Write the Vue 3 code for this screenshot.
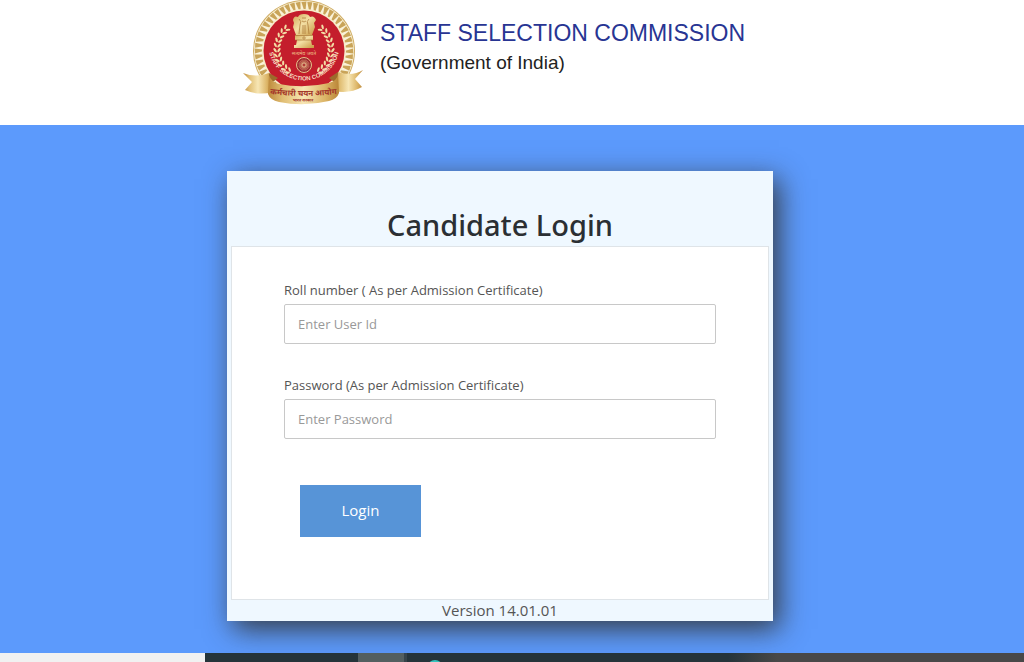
<template>
  <div class="page">
    <header class="header">
      <div class="container brand">
        <svg class="emblem" viewBox="0 0 122 105" role="img" aria-label="Staff Selection Commission emblem">
          <defs>
            <linearGradient id="gold" x1="0" y1="0" x2="1" y2="1">
              <stop offset="0" stop-color="#d2a956" />
              <stop offset="0.45" stop-color="#f3dfa4" />
              <stop offset="1" stop-color="#c6963f" />
            </linearGradient>
            <linearGradient id="ribbon" x1="0" y1="0" x2="1" y2="0">
              <stop offset="0" stop-color="#bd8a3c" />
              <stop offset="0.2" stop-color="#e0bd72" />
              <stop offset="0.5" stop-color="#f7e6b4" />
              <stop offset="0.8" stop-color="#dcb567" />
              <stop offset="1" stop-color="#b98537" />
            </linearGradient>
            <path id="name-arc" d="M26.5 45 A35.5 35.5 0 0 0 97.5 45" />
            <path id="ribbon-arc" d="M29 94 Q61 98 94 94" />
            <path id="ribbon-arc-small" d="M40 101 Q61 102 82 101" />
          </defs>

          <circle cx="62" cy="51" r="51" fill="#cfac62" />
          <circle cx="62" cy="51" r="50" fill="#faf2d8" />
          <path
            v-for="n in 52"
            :key="'tooth' + n"
            d="M59.4 2 L64.4 1.6 L63.6 9.4 L61.8 9.4 Z"
            fill="#c9a459"
            :transform="`rotate(${n * 6.923} 62 51)`"
          />
          <circle cx="62" cy="51" r="42" fill="#f7ecc9" />
          <circle cx="62" cy="51" r="40.5" fill="#c41e2c" />

          <!-- Laurel wreath -->
          <g fill="#f3dda5">
            <g v-for="leaf in leaves" :key="leaf.id" :transform="leaf.transform">
              <ellipse cx="0" cy="-1.9" rx="2.5" ry="1.1" transform="rotate(35 0 -1.9)" />
              <ellipse cx="0" cy="1.9" rx="2.5" ry="1.1" transform="rotate(-35 0 1.9)" />
            </g>
          </g>

          <!-- Lion capital -->
          <g fill="url(#gold)">
            <path d="M51 20 Q52 15 56 17 Q57 14 62 14 Q67 14 68 17 Q72 15 74 20 L72 23 L73 27 L70 35 L54 35 L51 27 L52 23 Z" />
            <path d="M53 35 H71 V40 H53 Z M55 40 H69 L70 45 H54 Z M52 45 H72 V48 H52 Z" />
          </g>
          <g fill="none" stroke="#a87432" stroke-width="0.7">
            <path d="M57 19 Q60 21 58 25 L57 34 M67 19 Q64 21 66 25 L67 34 M60 18 H64 M60 21 Q62 23 64 21 M61 25 V34 M63 25 V34 M53 35.5 H71 M53 40 H71" />
            <circle cx="62" cy="38" r="1.2" />
          </g>
          <text class="motto" x="62" y="55">सत्यमेव जयते</text>

          <!-- Wheel -->
          <circle cx="62" cy="65" r="7.5" fill="#9e2930" stroke="#e5c28a" stroke-width="1" />
          <path
            v-for="n in 12"
            :key="'spoke' + n"
            d="M62 59.5 V70.5"
            stroke="#dca777"
            stroke-width="0.5"
            :transform="`rotate(${n * 15} 62 65)`"
          />
          <circle cx="62" cy="65" r="2" fill="#b03a37" stroke="#e8c795" stroke-width="0.8" />

          <text class="arc-name">
            <textPath href="#name-arc" startOffset="50%">STAFF SELECTION COMMISSION</textPath>
          </text>

          <!-- Ribbon -->
          <path d="M1 73 Q14 78 27 73 L31 92 Q16 96 3 90 L10 82 Z" fill="url(#ribbon)" />
          <path d="M121 70 Q110 77 96 72 L92 91 Q108 94 120 87 L113 79 Z" fill="url(#ribbon)" />
          <path d="M27 73 L36 78 L27 85 Z M96 72 L87 78 L96 85 Z" fill="#9c6b2c" />
          <path d="M27 75 Q29 82 37 84 Q62 89 87 83 Q95 81 96 74 L97 93 Q95 99 87 101 Q62 107 37 102 Q28 100 26 94 Z" fill="url(#ribbon)" />
          <text class="ribbon-name">
            <textPath href="#ribbon-arc" startOffset="50%">कर्मचारी चयन आयोग</textPath>
          </text>
          <text class="ribbon-small">
            <textPath href="#ribbon-arc-small" startOffset="50%">भारत सरकार</textPath>
          </text>
        </svg>
        <div class="brand-text">
          <p class="brand-name">STAFF SELECTION COMMISSION</p>
          <p class="brand-sub">(Government of India)</p>
        </div>
      </div>
    </header>

    <main class="main">
      <section class="container card">
        <h1 class="card-title">Candidate Login</h1>
        <form class="panel" @submit.prevent>
          <div class="field">
            <label for="roll">Roll number ( As per Admission Certificate)</label>
            <input id="roll" v-model="userId" type="text" placeholder="Enter User Id" />
          </div>
          <div class="field">
            <label for="password">Password (As per Admission Certificate)</label>
            <input id="password" v-model="password" type="password" placeholder="Enter Password" />
          </div>
          <button class="login-btn" type="submit">Login</button>
        </form>
        <p class="version">Version 14.01.01</p>
      </section>
    </main>

    <footer class="taskbar">
      <div class="taskbar-search"></div>
      <div class="taskbar-space"></div>
      <div class="taskbar-active"></div>
      <div class="taskbar-apps">
        <svg width="16" height="9" viewBox="0 0 16 9">
          <circle cx="8" cy="15" r="8" fill="#35c3bd" />
        </svg>
      </div>
    </footer>
  </div>
</template>

<script setup>
import { ref } from 'vue'

const userId = ref('')
const password = ref('')

// Leaves run up both sides of the wreath
const leaves = []
for (let i = 0; i < 11; i++) {
  const angle = 40 + i * 10.5
  leaves.push({ id: 'r' + i, transform: `rotate(${angle} 62 49) translate(62 22)` })
  leaves.push({ id: 'l' + i, transform: `rotate(${-angle} 62 49) translate(62 22) scale(-1 1)` })
}
</script>

<style>
body {
  margin: 0;
}
</style>

<style scoped>
.page {
  min-height: 100vh;
  display: flex;
  flex-direction: column;
  background: #fff;
  font-family: "Open Sans", "Noto Sans", sans-serif;
  color: #333;
}

.container {
  width: 100%;
  max-width: 546px;
  box-sizing: border-box;
}

.header,
.main {
  display: flex;
  justify-content: center;
  padding-right: 24px;
}

.header {
  padding-bottom: 20px;
}

.brand {
  display: flex;
  align-items: flex-start;
  gap: 16px;
  padding-left: 15px;
}

.emblem {
  width: 122px;
  height: 105px;
  flex-shrink: 0;
}

.brand-text {
  padding-top: 18px;
  font-family: "Liberation Sans", Arial, sans-serif;
}

.brand-name,
.brand-sub {
  margin: 0;
  line-height: 30px;
  white-space: nowrap;
}

.brand-name {
  font-size: 23px;
  color: #283593;
}

.brand-sub {
  font-size: 19px;
  color: #222;
}

.motto,
.arc-name,
.ribbon-name,
.ribbon-small {
  text-anchor: middle;
  font-family: "Noto Sans", sans-serif;
}

.motto {
  font-size: 5px;
  fill: #efc08a;
}

.arc-name {
  font-family: "Liberation Sans", Arial, sans-serif;
  font-size: 6px;
  font-weight: 700;
  fill: #f6dcc0;
}

.ribbon-name {
  font-size: 8px;
  font-weight: 700;
  fill: #a3362a;
}

.ribbon-small {
  font-size: 4px;
  font-weight: 700;
  fill: #a3362a;
}

.main {
  flex: 1;
  align-items: flex-start;
  padding-top: 46px;
  padding-bottom: 32px;
  background: #5c9afc;
  overflow: hidden;
}

.card {
  padding: 0 4px;
  background: #eff8ff;
  box-shadow: 6px 8px 26px rgba(50, 50, 50, 0.9);
}

.card-title {
  margin: 0;
  padding: 34px 0 2px;
  line-height: 39px;
  font-family: "Noto Sans", "Open Sans", sans-serif;
  font-size: 29px;
  font-weight: 500;
  text-align: center;
  color: #2b2f33;
}

.panel {
  padding: 34px 52px 62px;
  background: #fff;
  border: 1px solid #dfe4e8;
}

.field {
  display: flex;
  flex-direction: column;
  gap: 5px;
  margin-bottom: 32px;
}

.field label {
  font-size: 13px;
  line-height: 18px;
  color: #555;
}

.field input {
  height: 40px;
  box-sizing: border-box;
  padding: 0 13px;
  border: 1px solid #c8c8c8;
  border-radius: 2px;
  background: #fff;
  font-family: inherit;
  font-size: 13px;
  color: #333;
}

.field input::placeholder {
  color: #999;
  opacity: 1;
}

.login-btn {
  display: block;
  width: 121px;
  height: 52px;
  margin: 46px 0 0 16px;
  padding: 0 0 2px;
  border: none;
  background: #5794d7;
  color: #fff;
  font-family: inherit;
  font-size: 15px;
  cursor: pointer;
}

.version {
  margin: 0;
  line-height: 21px;
  font-size: 15px;
  text-align: center;
  color: #555;
}

.taskbar {
  display: flex;
  height: 9px;
  background: #25343a;
}

.taskbar-search {
  width: 20%;
  background: #f1f1f1;
}

.taskbar-space {
  width: 15%;
}

.taskbar-active {
  width: 46px;
  border-right: 3px solid #36444a;
  background: #535f60;
}

.taskbar-apps {
  flex: 1;
  padding-left: 20px;
  background: linear-gradient(90deg, #25343a 52%, #484848 60%);
}

.taskbar-apps svg {
  display: block;
}
</style>
